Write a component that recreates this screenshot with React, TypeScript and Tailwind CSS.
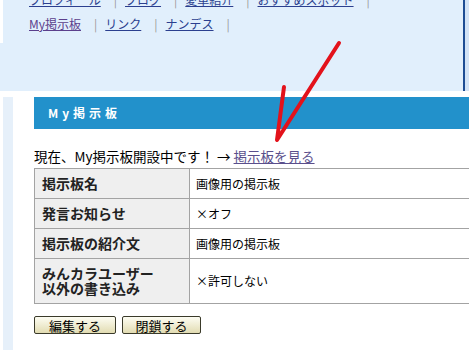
import React from "react";

const navTop = ["プロフィール", "ブログ", "愛車紹介", "おすすめスポット"];
const navBottom = ["My掲示板", "リンク", "ナンデス"];

const rows = [
  { label: "掲示板名", value: "画像用の掲示板", h: "h-[30px]" },
  { label: "発言お知らせ", value: "×オフ", h: "h-[30px]" },
  { label: "掲示板の紹介文", value: "画像用の掲示板", h: "h-[30px]" },
  { label: "みんカラユーザー\n以外の書き込み", value: "×許可しない", h: "h-[45px]" },
];

function NavRow({ items, first }: { items: string[]; first?: string }) {
  return (
    <div className="flex items-center h-[24px] text-[12px] whitespace-nowrap">
      {items.map((item, i) => (
        <React.Fragment key={item}>
          <a
            className={
              i === 0 && first
                ? "underline text-[#5b3f8c]"
                : "underline text-[#2b3f8f]"
            }
          >
            {item}
          </a>
          <span className="text-[#999] ml-[13px] mr-[8px]">|</span>
        </React.Fragment>
      ))}
    </div>
  );
}

function Button({ label, width }: { label: string; width: string }) {
  return (
    <button
      className={`${width} h-[18px] border border-[#3a3a2a] rounded-[2px] bg-gradient-to-b from-[#fdfdf3] to-[#e2dcb2] text-[13px] leading-none text-black`}
    >
      {label}
    </button>
  );
}

export default function App() {
  return (
    <div
      className="relative w-[469px] h-[350px] overflow-hidden bg-white"
      style={{ fontFamily: '"Noto Sans CJK JP", "Noto Sans", sans-serif' }}
    >
      {/* top navigation panel */}
      <div className="flex h-[91px] bg-[#e1effc]">
        <div className="w-[3px] h-[43px] bg-white shrink-0" />
        <div className="flex-1 pl-[26px] -mt-[12px] overflow-hidden">
          <NavRow items={navTop} />
          <NavRow items={navBottom} first="My掲示板" />
        </div>
        <div className="w-[2px] bg-[#1d4d94] shrink-0" />
        <div className="w-[4px] bg-[#d2e3f6] shrink-0" />
      </div>

      {/* main area */}
      <div className="flex mt-[6px] h-[260px]">
        <div className="w-[3px] shrink-0" />
        <div className="w-[10px] bg-[#e6f0fa] shrink-0" />
        <div className="w-[21px] shrink-0" />
        <div className="w-[460px] shrink-0">
          <div className="h-[32px] bg-[#2291cb] flex items-center pl-[14px] text-white text-[12px] font-bold tracking-[4px]">
            My掲示板
          </div>

          <div className="mt-[17px] h-[20px] text-[13.5px] leading-[20px] text-black whitespace-nowrap">
            現在、My掲示板開設中です！ →{" "}
            <a className="underline text-[#5a4f8c]">掲示板を見る</a>
          </div>

          <table className="mt-[2px] w-full border-collapse">
            <tbody>
              {rows.map((r) => (
                <tr key={r.label} className={r.h}>
                  <td className="w-[155px] bg-[#efefef] border border-[#a3a3a3] pl-[7px] text-[14px] font-bold leading-[15px] whitespace-pre-line text-[#222]">
                    {r.label}
                  </td>
                  <td className="border border-[#a3a3a3] pl-[6px] text-[12px] text-black">
                    {r.value}
                  </td>
                </tr>
              ))}
            </tbody>
          </table>

          <div className="flex gap-[6px] mt-[12px]">
            <Button label="編集する" width="w-[82px]" />
            <Button label="閉鎖する" width="w-[79px]" />
          </div>
        </div>
      </div>

      {/* red hand-drawn check arrow */}
      <svg
        className="absolute left-0 top-0 pointer-events-none"
        width="469"
        height="350"
      >
        <path
          d="M339 43 L277 140 L284 87"
          fill="none"
          stroke="#e3121b"
          strokeWidth="4"
          strokeLinecap="round"
          strokeLinejoin="round"
        />
      </svg>
    </div>
  );
}
